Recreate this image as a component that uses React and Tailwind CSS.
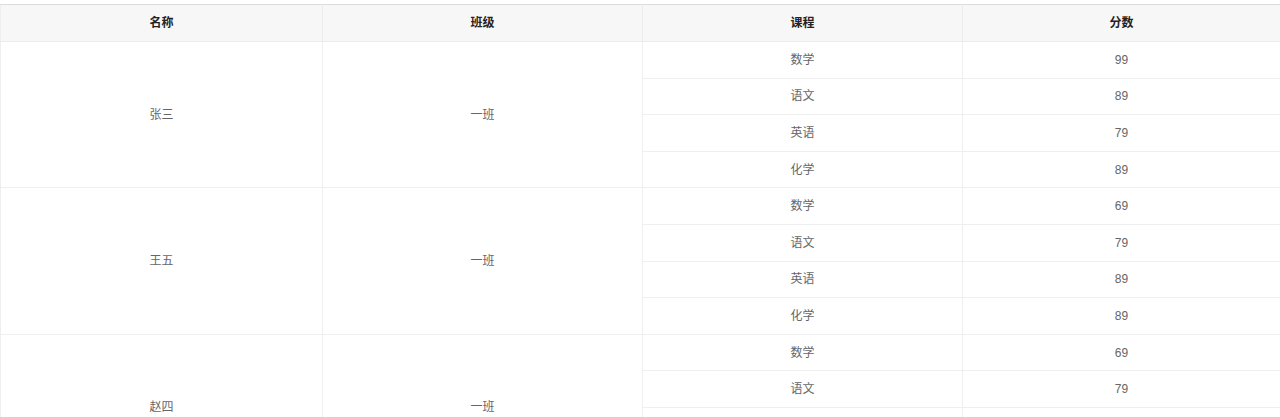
import React from "react";

const students = [
  {
    name: "张三",
    cls: "一班",
    scores: [
      ["数学", 99],
      ["语文", 89],
      ["英语", 79],
      ["化学", 89],
    ],
  },
  {
    name: "王五",
    cls: "一班",
    scores: [
      ["数学", 69],
      ["语文", 79],
      ["英语", 89],
      ["化学", 89],
    ],
  },
  {
    name: "赵四",
    cls: "一班",
    scores: [
      ["数学", 69],
      ["语文", 79],
      ["英语", 89],
      ["化学", 89],
    ],
  },
];

export default function App() {
  return (
    <div
      className="w-[1280px] h-[417px] overflow-hidden bg-white pt-[4px]"
      style={{ fontFamily: '"Liberation Sans", "Noto Sans CJK SC", sans-serif' }}
    >
      <table className="w-full table-fixed border-collapse border-t border-l border-t-[#dcdcdc] border-l-[#eeeeee] text-[12px]">
        <colgroup>
          <col className="w-[322px]" />
          <col className="w-[320px]" />
          <col className="w-[320px]" />
          <col />
        </colgroup>
        <thead>
          <tr className="h-[37px] bg-[#f7f7f7]">
            <th className="border-r border-b border-[#ececec] font-bold text-[#222] text-center">名称</th>
            <th className="border-r border-b border-[#ececec] font-bold text-[#222] text-center">班级</th>
            <th className="border-r border-b border-[#ececec] font-bold text-[#222] text-center">课程</th>
            <th className="border-b border-[#ececec] font-bold text-[#222] text-center">分数</th>
          </tr>
        </thead>
        <tbody>
          {students.map((s) =>
            s.scores.map(([course, score], i) => (
              <tr key={s.name + course} className="h-[36.6px]">
                {i === 0 && (
                  <>
                    <td rowSpan={4} className="border-r border-b border-[#efefef] text-center text-[#666]">
                      {s.name}
                    </td>
                    <td rowSpan={4} className="border-r border-b border-[#efefef] text-center text-[#666]">
                      {s.cls}
                    </td>
                  </>
                )}
                <td className="border-r border-b border-[#efefef] text-center text-[#666]">{course}</td>
                <td className="border-b border-[#efefef] text-center text-[#666]">{score}</td>
              </tr>
            ))
          )}
        </tbody>
      </table>
    </div>
  );
}
